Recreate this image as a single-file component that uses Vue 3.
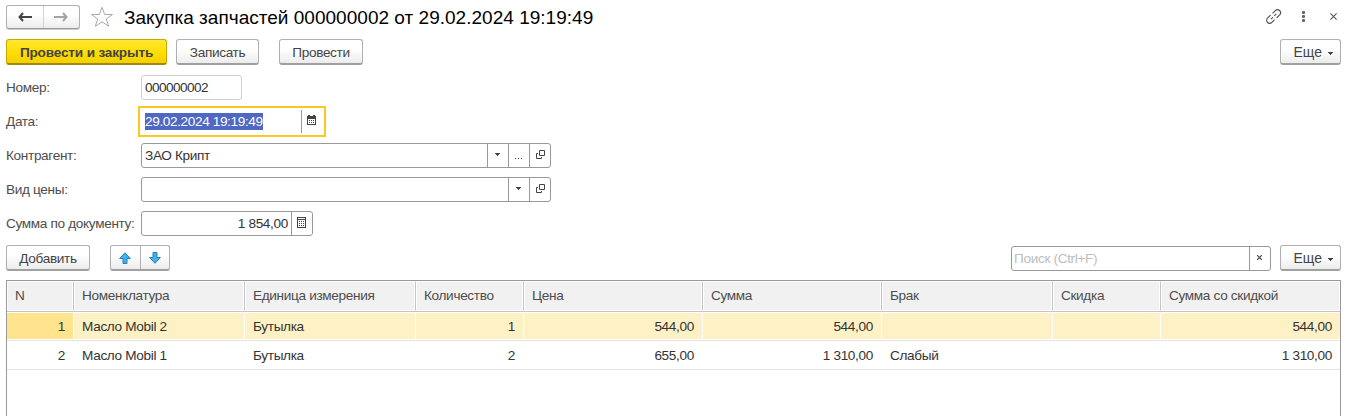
<script setup>
const columns = [
  { title: 'N', num: true },
  { title: 'Номенклатура' },
  { title: 'Единица измерения' },
  { title: 'Количество', num: true },
  { title: 'Цена', num: true },
  { title: 'Сумма', num: true },
  { title: 'Брак' },
  { title: 'Скидка', num: true },
  { title: 'Сумма со скидкой', num: true }
]
const rows = [
  ['1', 'Масло Mobil 2', 'Бутылка', '1', '544,00', '544,00', '', '', '544,00'],
  ['2', 'Масло Mobil 1', 'Бутылка', '2', '655,00', '1 310,00', 'Слабый', '', '1 310,00']
]
</script>

<template>
  <main class="window">
    <header class="titlebar">
      <div class="nav">
        <button>
          <svg width="14" height="10" viewBox="0 0 14 10"><path d="M5 1 1.5 5 5 9M2 5h12" fill="none" stroke="#444" stroke-width="2" /></svg>
        </button>
        <button>
          <svg width="14" height="10" viewBox="0 0 14 10"><path d="M9 1 12.5 5 9 9M12 5H0" fill="none" stroke="#a3a3a3" stroke-width="2" /></svg>
        </button>
      </div>
      <svg class="star" width="24" height="22" viewBox="0 0 24 22"><path d="M12 1.3 14.7 8.5H22.5L16.3 13 18.7 20.3 12 15.8 5.3 20.3 7.7 13 1.5 8.5H9.3Z" fill="#fff" stroke="#aaa" /></svg>
      <h1 class="title">Закупка запчастей 000000002 от 29.02.2024 19:19:49</h1>
      <div class="tools">
        <svg width="16" height="15" viewBox="0 0 16 15" fill="none" stroke="#555" stroke-width="1.2"><path d="M6.6 4.4 9.3 1.7a2.8 2.8 0 0 1 4.4 4.1L10.6 8.9M8.6 10.6 5.9 13.3a2.8 2.8 0 0 1-4.4-4.1L4.6 6.1M5 10.2l2-2M8.3 6.9l2-2" /></svg>
        <svg width="3" height="11" viewBox="0 0 3 11" fill="#666"><rect width="3" height="3" y="0" rx="1" /><rect width="3" height="3" y="4" rx="1" /><rect width="3" height="3" y="8" rx="1" /></svg>
        <svg width="7" height="7" viewBox="0 0 7 7"><path d="m.4.4 6.2 6.2m0-6.2L.4 6.6" stroke="#555" stroke-width="1.1" /></svg>
      </div>
    </header>

    <div class="commands">
      <button class="btn primary">Провести и закрыть</button>
      <button class="btn save">Записать</button>
      <button class="btn post">Провести</button>
      <button class="btn more"><span>Еще</span><svg width="5" height="3" viewBox="0 0 5 3"><path d="M0 0h5v1H4v1H3v1H2V2H1V1H0Z" fill="#444" /></svg></button>
    </div>

    <section class="form">
      <div class="row">
        <label>Номер:</label>
        <div class="field number"><span class="value">000000002</span></div>
      </div>
      <div class="row">
        <label>Дата:</label>
        <div class="field date">
          <span class="value"><span class="selected">29.02.2024 19:19:49</span></span>
          <span class="cell"><svg width="9" height="10" viewBox="0 0 9 10" shape-rendering="crispEdges"><path d="M0 1h9v9H0Z" fill="#444" /><path d="M1 0h2v2H1zM6 0h2v2H6z" fill="#444" /><path d="M1 4h7v5H1Z" fill="#fff" /><path d="M2 5h1v1H2zM4 5h1v1H4zM6 5h1v1H6zM2 7h1v1H2zM4 7h1v1H4zM6 7h1v1H6z" fill="#444" /></svg></span>
        </div>
      </div>
      <div class="row">
        <label>Контрагент:</label>
        <div class="field wide">
          <span class="value">ЗАО Крипт</span>
          <span class="cell"><svg width="5" height="3" viewBox="0 0 5 3"><path d="M0 0h5v1H4v1H3v1H2V2H1V1H0Z" fill="#444" /></svg></span>
          <span class="cell"><svg class="dots" width="7" height="1" viewBox="0 0 7 1"><path d="M0 0h1v1H0zM3 0h1v1H3zM6 0h1v1H6z" fill="#444" /></svg></span>
          <span class="cell open"><svg width="9" height="9" viewBox="0 0 9 9" fill="none" stroke="#444"><path d="M3.5.5h5v5h-5ZM2 3.5H.5v5h5V7" /></svg></span>
        </div>
      </div>
      <div class="row">
        <label>Вид цены:</label>
        <div class="field wide">
          <span class="value"></span>
          <span class="cell"><svg width="5" height="3" viewBox="0 0 5 3"><path d="M0 0h5v1H4v1H3v1H2V2H1V1H0Z" fill="#444" /></svg></span>
          <span class="cell open"><svg width="9" height="9" viewBox="0 0 9 9" fill="none" stroke="#444"><path d="M3.5.5h5v5h-5ZM2 3.5H.5v5h5V7" /></svg></span>
        </div>
      </div>
      <div class="row">
        <label>Сумма по документу:</label>
        <div class="field sum">
          <span class="value right">1 854,00</span>
          <span class="cell"><svg width="9" height="11" viewBox="0 0 9 11" shape-rendering="crispEdges"><path d="M.5.5h8v10h-8ZM0 2.5h9" fill="none" stroke="#444" /><path d="M2 4h1v1H2zM4 4h1v1H4zM6 4h1v1H6zM2 6h1v1H2zM4 6h1v1H4zM6 6h1v1H6zM2 8h1v1H2zM4 8h1v1H4zM6 8h1v1H6z" fill="#444" /></svg></span>
        </div>
      </div>
    </section>

    <div class="list-commands">
      <button class="btn add">Добавить</button>
      <div class="move">
        <button><svg width="12" height="12" viewBox="0 0 12 12"><path d="M6 .7 11.3 6.5H8v5H4v-5H.7Z" fill="#3fb2f0" stroke="#2a7db5" /></svg></button>
        <button><svg width="12" height="12" viewBox="0 0 12 12"><path d="M6 11.3 11.3 5.5H8v-5H4v5H.7Z" fill="#3fb2f0" stroke="#2a7db5" /></svg></button>
      </div>
      <div class="field search">
        <span class="value">Поиск (Ctrl+F)</span>
        <span class="cell"><svg width="5" height="5" viewBox="0 0 5 5"><path d="m0 0 5 5m0-5-5 5" stroke="#444" stroke-width="1.1" /></svg></span>
      </div>
      <button class="btn more"><span>Еще</span><svg width="5" height="3" viewBox="0 0 5 3"><path d="M0 0h5v1H4v1H3v1H2V2H1V1H0Z" fill="#444" /></svg></button>
    </div>

    <section class="table">
      <div class="grid head">
        <div v-for="c in columns" :key="c.title" class="th">{{ c.title }}</div>
      </div>
      <div v-for="(r, ri) in rows" :key="ri" class="grid line" :class="{ current: ri === 0 }">
        <div v-for="(v, i) in r" :key="i" class="td" :class="{ num: columns[i].num }">{{ v }}</div>
      </div>
    </section>
  </main>
</template>

<style>
body { background: #fff; overflow: hidden; }
</style>

<style scoped>
* { box-sizing: border-box; }
.window {
  height: 416px; overflow: hidden; display: flex; flex-direction: column;
  padding: 5px 17px 0 6px; background: #fff; color: #333;
  font: 13.6px/15px "Liberation Sans", Arial, sans-serif; letter-spacing: -0.33px; white-space: nowrap;
}
button { font: inherit; letter-spacing: inherit; color: #444; padding: 0; margin: 0; cursor: pointer; }
svg { display: block; flex: none; }
.titlebar { display: flex; height: 25px; margin-bottom: 9px; flex: none; }
.nav, .move {
  display: flex; border: 1px solid #b0b0b0; border-bottom-color: #999; border-radius: 3px;
  background: linear-gradient(#fff 40%, #ececec); box-shadow: 0 1px 0 #ccc;
}
.nav { width: 74px; height: 24px; }
.nav button, .move button { flex: 1; display: flex; align-items: center; justify-content: center; border: 0; background: none; }
.nav button + button { border-left: 1px solid #d4d4d4; }
.star { margin: 1px 0 0 10px; }
.title { margin: 2px 0 0 10px; font-size: 19px; line-height: 21px; font-weight: 400; color: #000; letter-spacing: 0.02px; }
.tools { margin-left: auto; display: flex; align-items: center; height: 23px; padding-right: 4px; }
.tools svg:nth-child(2) { margin-left: 20px; }
.tools svg:nth-child(3) { margin-left: 25px; }
.commands, .list-commands { display: flex; height: 26px; flex: none; }
.btn {
  height: 26px; border: 1px solid #b0b0b0; border-bottom: 2px solid #a0a0a0; border-radius: 3px;
  background: linear-gradient(#fff 40%, #ececec); padding-top: 2px;
}
.primary { width: 161px; font-weight: 700; letter-spacing: -0.17px; border-color: #c9a900; border-bottom-color: #a18a10; background: linear-gradient(#ffe833, #fddc00 60%, #f3d000); }
.save { width: 83px; margin-left: 9px; }
.post { width: 84px; margin-left: 20px; }
.more { width: 61px; margin-left: auto; display: flex; align-items: center; justify-content: flex-end; gap: 6px; padding-right: 7px; font-size: 14px; letter-spacing: 0; }
.more svg { margin-top: 1px; }
.form { padding-top: 5px; height: 180px; flex: none; }
.row { display: flex; align-items: center; height: 34px; }
.row label { width: 135px; color: #4d4d4d; }
.field { display: flex; height: 25px; border: 1px solid #999; border-radius: 3px; background: #fff; }
.value { flex: 1; padding: 4px 3px 0; }
.right { text-align: right; }
.cell { width: 21px; border-left: 1px solid #999; display: flex; align-items: center; justify-content: center; padding: 0 1px 2px 0; }
.open { padding: 0 0 2px 1px; }
.dots { margin-top: 9px; }
.number { width: 101px; border-color: #d0d0d0; letter-spacing: -0.56px; }
.date { width: 188px; height: 31px; margin-left: -3px; border: 2px solid #fac824; border-radius: 0; padding: 1px 2px; }
.date .cell { margin: 1px 0; padding-bottom: 3px; }
.selected { background: #4e68c3; color: #fff; display: inline-block; height: 17px; line-height: 17px; letter-spacing: -0.37px; }
.wide { width: 410px; }
.sum { width: 172px; }
.list-commands { margin-bottom: 9px; }
.add { width: 84px; }
.move { width: 60px; height: 26px; margin-left: 20px; border-bottom: 2px solid #a0a0a0; box-shadow: none; }
.move button + button { border-left: 1px solid #b0b0b0; }
.search { width: 260px; margin-left: auto; margin-top: 1px; }
.search .value { color: #bdbdbd; padding-left: 2px; }
.list-commands .more { margin-left: 9px; }
.table { flex: 1; border: 1px solid #999; border-bottom: 0; width: 1335px; }
.grid { display: grid; grid-template-columns: 67px 171px 171px 108px 179px 179px 171px 108px 179px; }
.head { height: 31px; border-bottom: 1px solid #c4c4c4; }
.th { background: #f1f1f1; border: 1px solid #fff; border-right: 1px solid #c4c4c4; box-shadow: inset -1px 0 #fff; padding: 6px 0 0 7px; color: #4d4d4d; }
.th:last-child { border-right-color: #fff; box-shadow: none; }
.line { height: 29px; border-bottom: 1px solid #e4e4e4; }
.td { padding: 7px 8px 0; border-right: 1px solid #fff; }
.td:last-child { border-right: 0; }
.num { text-align: right; }
.current .td { background: #fef1c5; border-top: 1px solid #fff; border-bottom: 1px solid #fff; padding-top: 6px; }
.current .td:first-child { background: #ffe48d; }
</style>
